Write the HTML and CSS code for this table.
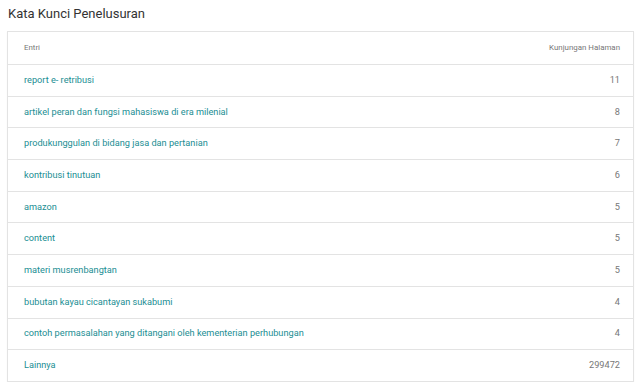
FILE: index.html
```html
<!DOCTYPE html>
<html>
<head>
<meta charset="utf-8">
<link rel="stylesheet" href="styles.css">
</head>
<body>
<h2 class="title">Kata Kunci Penelusuran</h2>
<div class="card">
  <div class="row head"><span>Entri</span><span>Kunjungan Halaman</span></div>
  <div class="row"><a>report e- retribusi</a><span>11</span></div>
  <div class="row"><a>artikel peran dan fungsi mahasiswa di era milenial</a><span>8</span></div>
  <div class="row"><a>produkunggulan di bidang jasa dan pertanian</a><span>7</span></div>
  <div class="row"><a>kontribusi tinutuan</a><span>6</span></div>
  <div class="row"><a>amazon</a><span>5</span></div>
  <div class="row"><a>content</a><span>5</span></div>
  <div class="row"><a>materi musrenbangtan</a><span>5</span></div>
  <div class="row"><a>bubutan kayau cicantayan sukabumi</a><span>4</span></div>
  <div class="row"><a>contoh permasalahan yang ditangani oleh kementerian perhubungan</a><span>4</span></div>
  <div class="row"><a>Lainnya</a><span>299472</span></div>
</div>
</body>
</html>
```
FILE: styles.css
```css
html, body { margin: 0; padding: 0; background: #fff; }
body {
  font-family: Roboto, "Liberation Sans", sans-serif;
  padding: 6px 6px 0 7px;
}
.title {
  margin: 0 0 9px 1px;
  font-size: 13px;
  font-weight: 400;
  color: #333;
  line-height: 16px;
}
.card {
  width: 625px;
  border: 1px solid #e3e3e3;
  box-shadow: 0 1px 1px rgba(0,0,0,0.06);
}
.row {
  display: flex;
  justify-content: space-between;
  align-items: center;
  box-sizing: border-box;
  height: 31.7px;
  padding: 0 13px 2px 16px;
  border-top: 1px solid #e3e3e3;
  font-size: 9.2px;
  color: #777;
}
.row:first-child { border-top: none; height: 32px; }
.row a { color: #1b8e93; font-size: 9.2px; }
.head { font-size: 7.9px; color: #777; }
```
